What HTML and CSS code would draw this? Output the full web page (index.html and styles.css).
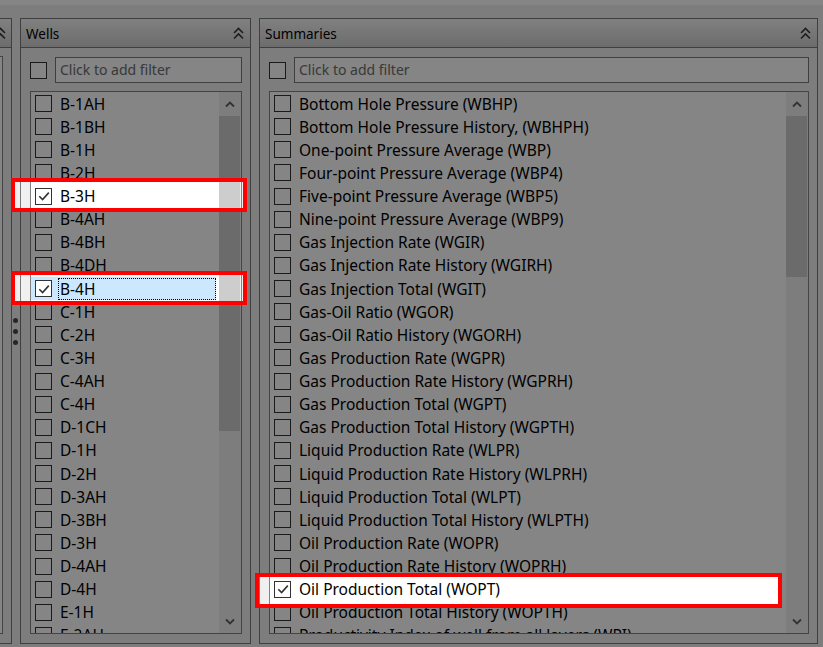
FILE: index.html
```html
<!DOCTYPE html>
<html lang="en">
<head>
<meta charset="utf-8">
<title>Wells and Summaries</title>
<link rel="stylesheet" href="styles.css">
</head>
<body>
<div class="topbar"></div>
<div class="main">
  <div class="panel stub">
    <div class="phead">
      <svg class="collapse" width="11" height="13" viewBox="0 0 11 13"><path d="M1 6 L5.5 1.5 L10 6 M1 11.5 L5.5 7 L10 11.5" /></svg>
    </div>
    <div class="pbody stub-body"><div class="stub-list"></div></div>
  </div>

  <div class="splitter"><span class="dot"></span><span class="dot"></span><span class="dot"></span></div>

  <section class="panel wells">
    <div class="phead">
      <span class="ptitle">Wells</span>
      <svg class="collapse" width="11" height="13" viewBox="0 0 11 13"><path d="M1 6 L5.5 1.5 L10 6 M1 11.5 L5.5 7 L10 11.5" /></svg>
    </div>
    <div class="pbody">
      <div class="filter"><span class="cb fcb"></span><div class="finput">Click to add filter</div></div>
      <div class="list">
        <ul class="rows">
          <li class="row"><span class="cb"></span><span class="label">B-1AH</span></li>
          <li class="row"><span class="cb"></span><span class="label">B-1BH</span></li>
          <li class="row"><span class="cb"></span><span class="label">B-1H</span></li>
          <li class="row"><span class="cb"></span><span class="label">B-2H</span></li>
          <li class="row"><span class="cb"><svg class="tick" viewBox="0 0 14 14"><path d="M2.3 7.2 L5.6 10.5 L11.8 3.6"/></svg></span><span class="label">B-3H</span></li>
          <li class="row"><span class="cb"></span><span class="label">B-4AH</span></li>
          <li class="row"><span class="cb"></span><span class="label">B-4BH</span></li>
          <li class="row"><span class="cb"></span><span class="label">B-4DH</span></li>
          <li class="row selected"><span class="cb"><svg class="tick" viewBox="0 0 14 14"><path d="M2.3 7.2 L5.6 10.5 L11.8 3.6"/></svg></span><span class="label">B-4H</span></li>
          <li class="row"><span class="cb"></span><span class="label">C-1H</span></li>
          <li class="row"><span class="cb"></span><span class="label">C-2H</span></li>
          <li class="row"><span class="cb"></span><span class="label">C-3H</span></li>
          <li class="row"><span class="cb"></span><span class="label">C-4AH</span></li>
          <li class="row"><span class="cb"></span><span class="label">C-4H</span></li>
          <li class="row"><span class="cb"></span><span class="label">D-1CH</span></li>
          <li class="row"><span class="cb"></span><span class="label">D-1H</span></li>
          <li class="row"><span class="cb"></span><span class="label">D-2H</span></li>
          <li class="row"><span class="cb"></span><span class="label">D-3AH</span></li>
          <li class="row"><span class="cb"></span><span class="label">D-3BH</span></li>
          <li class="row"><span class="cb"></span><span class="label">D-3H</span></li>
          <li class="row"><span class="cb"></span><span class="label">D-4AH</span></li>
          <li class="row"><span class="cb"></span><span class="label">D-4H</span></li>
          <li class="row"><span class="cb"></span><span class="label">E-1H</span></li>
          <li class="row"><span class="cb"></span><span class="label">E-2AH</span></li>
        </ul>
        <div class="vscroll">
          <div class="sbtn"><svg width="10" height="7" viewBox="0 0 10 7"><path d="M1 5.5 L5 1.5 L9 5.5"/></svg></div>
          <div class="track"><div class="thumb" style="height:315px"></div></div>
          <div class="sbtn"><svg width="10" height="7" viewBox="0 0 10 7"><path d="M1 1.5 L5 5.5 L9 1.5"/></svg></div>
        </div>
      </div>
    </div>
  </section>

  <section class="panel summaries">
    <div class="phead">
      <span class="ptitle">Summaries</span>
      <svg class="collapse" width="11" height="13" viewBox="0 0 11 13"><path d="M1 6 L5.5 1.5 L10 6 M1 11.5 L5.5 7 L10 11.5" /></svg>
    </div>
    <div class="pbody">
      <div class="filter"><span class="cb fcb"></span><div class="finput">Click to add filter</div></div>
      <div class="list">
        <ul class="rows">
          <li class="row"><span class="cb"></span><span class="label">Bottom Hole Pressure (WBHP)</span></li>
          <li class="row"><span class="cb"></span><span class="label">Bottom Hole Pressure History, (WBHPH)</span></li>
          <li class="row"><span class="cb"></span><span class="label">One-point Pressure Average (WBP)</span></li>
          <li class="row"><span class="cb"></span><span class="label">Four-point Pressure Average (WBP4)</span></li>
          <li class="row"><span class="cb"></span><span class="label">Five-point Pressure Average (WBP5)</span></li>
          <li class="row"><span class="cb"></span><span class="label">Nine-point Pressure Average (WBP9)</span></li>
          <li class="row"><span class="cb"></span><span class="label">Gas Injection Rate (WGIR)</span></li>
          <li class="row"><span class="cb"></span><span class="label">Gas Injection Rate History (WGIRH)</span></li>
          <li class="row"><span class="cb"></span><span class="label">Gas Injection Total (WGIT)</span></li>
          <li class="row"><span class="cb"></span><span class="label">Gas-Oil Ratio (WGOR)</span></li>
          <li class="row"><span class="cb"></span><span class="label">Gas-Oil Ratio History (WGORH)</span></li>
          <li class="row"><span class="cb"></span><span class="label">Gas Production Rate (WGPR)</span></li>
          <li class="row"><span class="cb"></span><span class="label">Gas Production Rate History (WGPRH)</span></li>
          <li class="row"><span class="cb"></span><span class="label">Gas Production Total (WGPT)</span></li>
          <li class="row"><span class="cb"></span><span class="label">Gas Production Total History (WGPTH)</span></li>
          <li class="row"><span class="cb"></span><span class="label">Liquid Production Rate (WLPR)</span></li>
          <li class="row"><span class="cb"></span><span class="label">Liquid Production Rate History (WLPRH)</span></li>
          <li class="row"><span class="cb"></span><span class="label">Liquid Production Total (WLPT)</span></li>
          <li class="row"><span class="cb"></span><span class="label">Liquid Production Total History (WLPTH)</span></li>
          <li class="row"><span class="cb"></span><span class="label">Oil Production Rate (WOPR)</span></li>
          <li class="row"><span class="cb"></span><span class="label">Oil Production Rate History (WOPRH)</span></li>
          <li class="row"><span class="cb"><svg class="tick" viewBox="0 0 14 14"><path d="M2.3 7.2 L5.6 10.5 L11.8 3.6"/></svg></span><span class="label">Oil Production Total (WOPT)</span></li>
          <li class="row"><span class="cb"></span><span class="label">Oil Production Total History (WOPTH)</span></li>
          <li class="row"><span class="cb"></span><span class="label">Productivity Index of well from all layers (WPI)</span></li>
        </ul>
        <div class="vscroll">
          <div class="sbtn"><svg width="10" height="7" viewBox="0 0 10 7"><path d="M1 5.5 L5 1.5 L9 5.5"/></svg></div>
          <div class="track"><div class="thumb" style="height:161px"></div></div>
          <div class="sbtn"><svg width="10" height="7" viewBox="0 0 10 7"><path d="M1 1.5 L5 5.5 L9 1.5"/></svg></div>
        </div>
      </div>
    </div>
  </section>
</div>

<svg class="spotlight" width="823" height="647" viewBox="0 0 823 647">
  <path class="dim" fill-rule="evenodd" d="M0 0H823V647H0Z M13 180H245V210H13Z M13 273H245V303H13Z M257 575H780V606H257Z"/>
  <rect class="callout" x="13" y="180" width="232" height="30"/>
  <rect class="callout" x="13" y="273" width="232" height="30"/>
  <rect class="callout" x="257" y="575" width="523" height="31"/>
</svg>
</body>
</html>
```

FILE: styles.css
```css
* { box-sizing: border-box; }
html, body { margin: 0; padding: 0; }
body {
  width: 823px;
  height: 647px;
  overflow: hidden;
  position: relative;
  background: #f0f0f0;
  font-family: "Noto Sans", "Open Sans", sans-serif;
  color: #000;
}
.topbar { height: 5px; background: #ffffff; }
.main { display: flex; height: 626px; margin-top: 13px; }

.panel {
  display: flex;
  flex-direction: column;
  border: 1px solid #7a7a7a;
  background: #f0f0f0;
  min-width: 0;
}
.stub { width: 12px; border-left: none; overflow: hidden; }
.wells { width: 231px; }
.summaries { width: 559px; margin-left: 8px; }

.phead {
  flex: none;
  height: 29px;
  display: flex;
  align-items: center;
  justify-content: space-between;
  padding: 0 6px 0 5px;
  background: linear-gradient(#f6f6f6, #d0d0d0);
  border-bottom: 1px solid #7a7a7a;
}
.stub .phead { justify-content: flex-end; padding: 0 5px 0 0; }
.ptitle { font-size: 13.5px; line-height: 18px; margin-top: 2px; }
.collapse { flex: none; margin-top: 1px; }
.collapse path { fill: none; stroke: #3a3a3a; stroke-width: 1.6; }

.pbody {
  flex: 1;
  min-height: 0;
  display: flex;
  flex-direction: column;
  gap: 8px;
  padding: 9px 8px 9px 9px;
}
.stub-body { padding: 8px 8px 9px 0; }
.stub-list { flex: 1; border: 1px solid #828282; border-left: none; background: #fff; }

.splitter {
  width: 8px;
  display: flex;
  flex-direction: column;
  align-items: center;
  justify-content: center;
  gap: 6px;
  padding-right: 1px;
}
.dot { width: 5px; height: 5px; border-radius: 50%; background: #4a4a4a; }

.filter { flex: none; height: 26px; display: flex; align-items: center; gap: 8px; }
.finput {
  flex: 1;
  height: 26px;
  border: 1px solid #7a7a7a;
  background: #fff;
  color: #6d6d6d;
  font-size: 14px;
  line-height: 24px;
  padding-left: 4px;
  white-space: nowrap;
}

.cb {
  flex: none;
  width: 17px;
  height: 17px;
  border: 1px solid #333;
  background: #fff;
  display: flex;
  align-items: center;
  justify-content: center;
}
.tick { width: 14px; height: 14px; }
.tick path { fill: none; stroke: #333; stroke-width: 1.6; }

.list {
  flex: 1;
  min-height: 0;
  display: flex;
  border: 1px solid #828282;
  background: #fff;
}
.rows { list-style: none; margin: 0; padding: 0; flex: 1; min-width: 0; overflow: hidden; }
.row {
  height: 23.14px;
  display: flex;
  align-items: center;
  padding-left: 4px;
  margin-right: 3px;
  font-size: 15.5px;
  white-space: nowrap;
}
.label {
  flex: 1;
  margin-left: 6px;
  padding-left: 1px;
  height: 22px;
  line-height: 20px;
  border: 1px solid transparent;
}
.row.selected { background: #cce8ff; }
.row.selected .label { border: 1px dotted #000; }

.vscroll { flex: none; width: 22px; display: flex; flex-direction: column; background: #f0f0f0; }
.sbtn { flex: none; height: 24px; display: flex; align-items: center; justify-content: center; }
.sbtn path { fill: none; stroke: #606060; stroke-width: 1.8; }
.track { flex: 1; }
.thumb { background: #cdcdcd; margin: 0 1px 0 0; }

.spotlight { position: absolute; left: 0; top: 0; pointer-events: none; }
.spotlight .dim { fill: rgba(0, 0, 0, 0.48); }
.spotlight .callout { fill: none; stroke: #ff0000; stroke-width: 4; }
```
